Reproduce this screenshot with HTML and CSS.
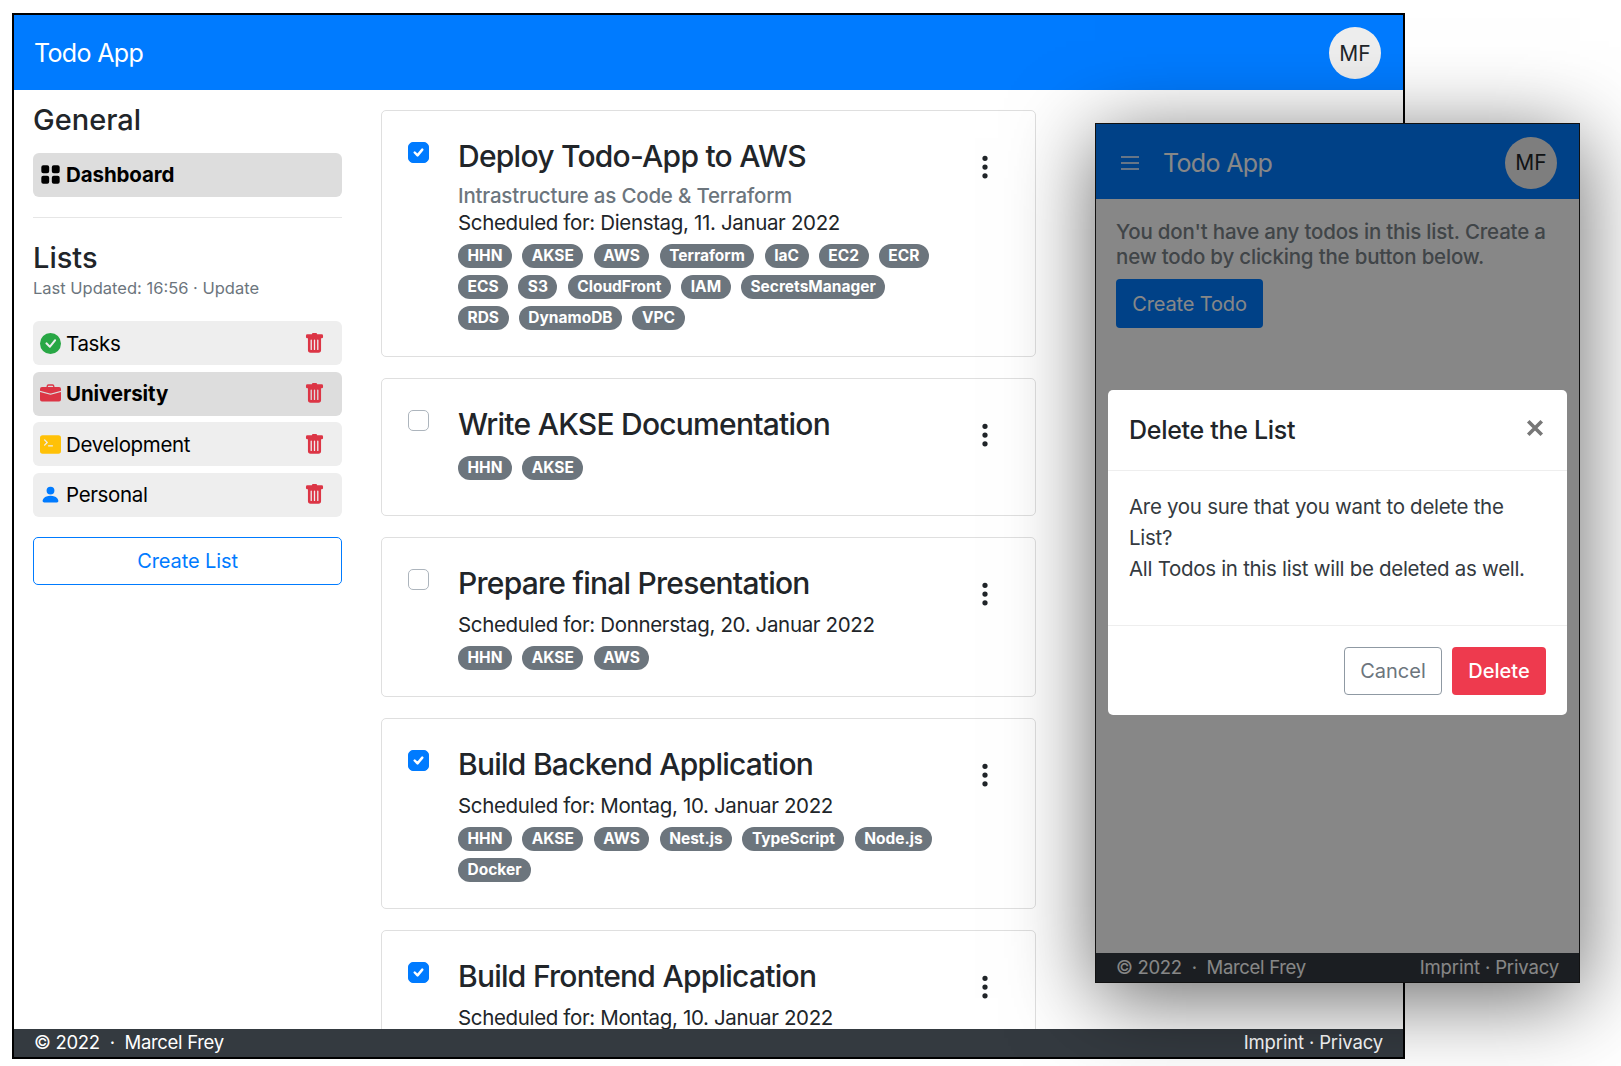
FILE: index.html
```html
<!DOCTYPE html>
<html>
	<head>
		<meta charset="utf-8" />
		<title>Todo App</title>
		<link rel="stylesheet" href="styles.css">
	</head>
	<body>
		<svg class="defs" xmlns="http://www.w3.org/2000/svg">
			<symbol id="i-grid" viewBox="0 0 16 16"><path d="M1 2.5A1.5 1.5 0 0 1 2.5 1h3A1.5 1.5 0 0 1 7 2.5v3A1.5 1.5 0 0 1 5.5 7h-3A1.5 1.5 0 0 1 1 5.5v-3zm8 0A1.5 1.5 0 0 1 10.5 1h3A1.5 1.5 0 0 1 15 2.5v3A1.5 1.5 0 0 1 13.5 7h-3A1.5 1.5 0 0 1 9 5.5v-3zm-8 8A1.5 1.5 0 0 1 2.5 9h3A1.5 1.5 0 0 1 7 10.5v3A1.5 1.5 0 0 1 5.5 15h-3A1.5 1.5 0 0 1 1 13.5v-3zm8 0A1.5 1.5 0 0 1 10.5 9h3a1.5 1.5 0 0 1 1.5 1.5v3a1.5 1.5 0 0 1-1.5 1.5h-3A1.5 1.5 0 0 1 9 13.5v-3z"/></symbol>
			<symbol id="i-check" viewBox="0 0 16 16"><path d="M16 8A8 8 0 1 1 0 8a8 8 0 0 1 16 0zm-3.97-3.03a.75.75 0 0 0-1.08.022L7.477 9.417 5.384 7.323a.75.75 0 0 0-1.06 1.06L6.97 11.03a.75.75 0 0 0 1.079-.02l3.992-4.99a.75.75 0 0 0-.01-1.05z"/></symbol>
			<symbol id="i-case" viewBox="0 0 16 16"><path d="M6.5 1A1.5 1.5 0 0 0 5 2.5V3H1.5A1.5 1.5 0 0 0 0 4.5v1.384l7.614 2.03a1.5 1.5 0 0 0 .772 0L16 5.884V4.5A1.5 1.5 0 0 0 14.5 3H11v-.5A1.5 1.5 0 0 0 9.5 1h-3zm0 1h3a.5.5 0 0 1 .5.5V3H6v-.5a.5.5 0 0 1 .5-.5z"/><path d="M0 12.5A1.5 1.5 0 0 0 1.5 14h13a1.5 1.5 0 0 0 1.5-1.5V6.85L8.129 8.947a.5.5 0 0 1-.258 0L0 6.85v5.65z"/></symbol>
			<symbol id="i-terminal" viewBox="0 0 16 16"><path d="M0 3a2 2 0 0 1 2-2h12a2 2 0 0 1 2 2v10a2 2 0 0 1-2 2H2a2 2 0 0 1-2-2V3zm9.5 5.5h-3a.5.5 0 0 0 0 1h3a.5.5 0 0 0 0-1zm-6.354-.354a.5.5 0 1 0 .708.708l2-2a.5.5 0 0 0 0-.708l-2-2a.5.5 0 1 0-.708.708L4.793 6.5 3.146 8.146z"/></symbol>
			<symbol id="i-person" viewBox="0 0 16 16"><path d="M3 14s-1 0-1-1 1-4 6-4 6 3 6 4-1 1-1 1H3zm5-6a3 3 0 1 0 0-6 3 3 0 0 0 0 6z"/></symbol>
			<symbol id="i-trash" viewBox="0 0 16 16"><path d="M2.5 1a1 1 0 0 0-1 1v1a1 1 0 0 0 1 1H3v9a2 2 0 0 0 2 2h6a2 2 0 0 0 2-2V4h.5a1 1 0 0 0 1-1V2a1 1 0 0 0-1-1H10a1 1 0 0 0-1-1H7a1 1 0 0 0-1 1H2.5zm3 4a.5.5 0 0 1 .5.5v7a.5.5 0 0 1-1 0v-7a.5.5 0 0 1 .5-.5zM8 5a.5.5 0 0 1 .5.5v7a.5.5 0 0 1-1 0v-7A.5.5 0 0 1 8 5zm3 .5v7a.5.5 0 0 1-1 0v-7a.5.5 0 0 1 1 0z"/></symbol>
			<symbol id="i-dots" viewBox="0 0 16 16"><path d="M9.5 13a1.5 1.5 0 1 1-3 0 1.5 1.5 0 0 1 3 0zm0-5a1.5 1.5 0 1 1-3 0 1.5 1.5 0 0 1 3 0zm0-5a1.5 1.5 0 1 1-3 0 1.5 1.5 0 0 1 3 0z"/></symbol>
		</svg>

		<!-- desktop window -->
		<div class="window desktop">
			<header class="topbar">
				<span class="brand">Todo App</span>
				<span class="avatar">MF</span>
			</header>
			<div class="content">
				<aside class="sidebar">
					<h3 class="side-title">General</h3>
					<a class="side-item active"><svg class="side-icon"><use href="#i-grid"/></svg>Dashboard</a>
					<hr class="divider">
					<h3 class="side-title">Lists</h3>
					<p class="updated">Last Updated: 16:56 · Update</p>
					<ul class="lists">
						<li class="side-item"><svg class="side-icon green"><use href="#i-check"/></svg>Tasks<svg class="trash"><use href="#i-trash"/></svg></li>
						<li class="side-item active"><svg class="side-icon red"><use href="#i-case"/></svg>University<svg class="trash"><use href="#i-trash"/></svg></li>
						<li class="side-item"><svg class="side-icon yellow"><use href="#i-terminal"/></svg>Development<svg class="trash"><use href="#i-trash"/></svg></li>
						<li class="side-item"><svg class="side-icon blue"><use href="#i-person"/></svg>Personal<svg class="trash"><use href="#i-trash"/></svg></li>
					</ul>
					<button class="btn-outline">Create List</button>
				</aside>
				<main class="todos">
					<article class="card">
						<span class="check on"><svg viewBox="0 0 20 20"><path d="M6 10l3 3 5-6"/></svg></span>
						<div class="card-body">
							<h2 class="todo-title">Deploy Todo-App to AWS</h2>
							<p class="todo-sub">Intrastructure as Code &amp; Terraform</p>
							<p class="todo-date">Scheduled for: Dienstag, 11. Januar 2022</p>
							<div class="tags">
								<span class="tag">HHN</span><span class="tag">AKSE</span><span class="tag">AWS</span><span class="tag">Terraform</span><span class="tag">IaC</span><span class="tag">EC2</span><span class="tag">ECR</span><span class="tag">ECS</span><span class="tag">S3</span><span class="tag">CloudFront</span><span class="tag">IAM</span><span class="tag">SecretsManager</span><span class="tag">RDS</span><span class="tag">DynamoDB</span><span class="tag">VPC</span>
							</div>
						</div>
						<svg class="kebab"><use href="#i-dots"/></svg>
					</article>
					<article class="card">
						<span class="check"></span>
						<div class="card-body">
							<h2 class="todo-title">Write AKSE Documentation</h2>
							<div class="tags">
								<span class="tag">HHN</span><span class="tag">AKSE</span>
							</div>
						</div>
						<svg class="kebab"><use href="#i-dots"/></svg>
					</article>
					<article class="card">
						<span class="check"></span>
						<div class="card-body">
							<h2 class="todo-title">Prepare final Presentation</h2>
							<p class="todo-date">Scheduled for: Donnerstag, 20. Januar 2022</p>
							<div class="tags">
								<span class="tag">HHN</span><span class="tag">AKSE</span><span class="tag">AWS</span>
							</div>
						</div>
						<svg class="kebab"><use href="#i-dots"/></svg>
					</article>
					<article class="card">
						<span class="check on"><svg viewBox="0 0 20 20"><path d="M6 10l3 3 5-6"/></svg></span>
						<div class="card-body">
							<h2 class="todo-title">Build Backend Application</h2>
							<p class="todo-date">Scheduled for: Montag, 10. Januar 2022</p>
							<div class="tags">
								<span class="tag">HHN</span><span class="tag">AKSE</span><span class="tag">AWS</span><span class="tag">Nest.js</span><span class="tag">TypeScript</span><span class="tag">Node.js</span><span class="tag">Docker</span>
							</div>
						</div>
						<svg class="kebab"><use href="#i-dots"/></svg>
					</article>
					<article class="card">
						<span class="check on"><svg viewBox="0 0 20 20"><path d="M6 10l3 3 5-6"/></svg></span>
						<div class="card-body">
							<h2 class="todo-title">Build Frontend Application</h2>
							<p class="todo-date">Scheduled for: Montag, 10. Januar 2022</p>
						</div>
						<svg class="kebab"><use href="#i-dots"/></svg>
					</article>
				</main>
			</div>
			<footer class="footbar">
				<span class="foot-copy">© 2022 &nbsp;·&nbsp; Marcel Frey</span>
				<span>Imprint · Privacy</span>
			</footer>
		</div>

		<!-- mobile window with the dialog open -->
		<div class="window mobile">
			<header class="topbar">
				<svg class="burger" viewBox="0 0 20 16"><path d="M1 2h18M1 8h18M1 14h18"/></svg>
				<span class="brand">Todo App</span>
				<span class="avatar">MF</span>
			</header>
			<div class="empty">
				<p class="empty-text">You don't have any todos in this list. Create a new todo by clicking the button below.</p>
				<button class="btn-primary">Create Todo</button>
			</div>
			<footer class="footbar">
				<span class="foot-copy">© 2022 &nbsp;·&nbsp; Marcel Frey</span>
				<span>Imprint · Privacy</span>
			</footer>
			<div class="backdrop"></div>
			<div class="modal">
				<div class="modal-head">
					<h4 class="modal-title">Delete the List</h4>
					<svg class="modal-close" viewBox="0 0 16 16"><path d="M2 2l12 12M14 2L2 14"/></svg>
				</div>
				<div class="modal-body">Are you sure that you want to delete the List?<br>All Todos in this list will be deleted as well.</div>
				<div class="modal-foot">
					<button class="btn-cancel">Cancel</button>
					<button class="btn-danger">Delete</button>
				</div>
			</div>
		</div>
	</body>
</html>
```

FILE: styles.css
```css
html, body { height: 100%; }
body {
	margin: 0;
	background: #fff;
	font-family: Inter, "Liberation Sans", sans-serif;
	font-size: 21px;
	color: #212529;
	overflow: hidden;
	position: relative;
}
h2, h3, h4, p, ul { margin: 0; padding: 0; }
ul { list-style: none; }
button { font-family: inherit; font-size: 20px; cursor: pointer; }
.defs { display: none; }

.window {
	position: absolute;
	display: flex;
	flex-direction: column;
	box-sizing: border-box;
	background: #fff;
	overflow: hidden;
}
.desktop { left: 12px; top: 13px; width: 1393px; height: 1046px; border: 2px solid #000; }
.mobile {
	left: 1095px; top: 123px; width: 485px; height: 860px;
	border: 1.5px solid #111;
	box-shadow: 0 15px 80px rgba(0,0,0,0.6);
}

.topbar {
	display: flex;
	align-items: center;
	flex: none;
	box-sizing: border-box;
	height: 75px;
	padding: 1px 22px 0 20px;
	background: #007bff;
	color: #fff;
}
.brand { font-size: 25px; letter-spacing: -0.65px; flex: 1; }
.avatar {
	width: 52px; height: 52px;
	border-radius: 50%;
	background: #eee;
	color: #212529;
	display: flex; align-items: center; justify-content: center;
	font-size: 21px;
}

.content { flex: 1; display: flex; min-height: 0; overflow: hidden; }
.sidebar { flex: none; width: 309px; margin: 0 39px 0 19px; padding-top: 12px; }
.side-title { font-size: 29px; font-weight: 500; line-height: 36px; }
.side-item {
	display: flex;
	align-items: center;
	box-sizing: border-box;
	height: 44px;
	padding-left: 7px;
	border-radius: 6px;
	background: #eee;
	color: #000;
	font-size: 20.5px;
	letter-spacing: -0.35px;
}
.side-item.active { background: #ddd; font-weight: 700; letter-spacing: -0.1px; }
.sidebar > .side-item { margin-top: 15px; padding-bottom: 1px; }
.side-icon { width: 21px; height: 21px; margin-right: 5px; fill: #000; flex: none; }
.side-icon.green { fill: #28a745; }
.side-icon.red { fill: #dc3545; }
.side-icon.yellow { fill: #ffc107; }
.side-icon.blue { fill: #007bff; }
.trash { width: 21px; height: 21px; fill: #dc3545; margin-left: auto; margin-right: 17px; flex: none; }
.divider { border: none; border-top: 1px solid #e6e6e6; margin: 20px 0 22px; }
.updated { font-size: 16.5px; color: #6c757d; line-height: 24px; }
.lists { display: flex; flex-direction: column; gap: 6.5px; margin-top: 21px; }
.btn-outline {
	display: block;
	width: 100%; height: 48px;
	margin-top: 20px;
	background: #fff;
	border: 1.5px solid #007bff;
	border-radius: 5px;
	color: #007bff;
	letter-spacing: -0.1px;
}

.todos { flex: 1; padding-top: 20px; min-width: 0; }
.card {
	display: flex;
	box-sizing: border-box;
	width: 655px;
	min-height: 138px;
	margin-bottom: 21px;
	padding: 27px 36px 26px 26px;
	background: #fff;
	border: 1px solid #dfdfdf;
	border-radius: 5px;
}
.check {
	flex: none;
	box-sizing: border-box;
	width: 21px; height: 21px;
	margin: 4px 29px 0 0;
	border: 1px solid #adb5bd;
	border-radius: 5px;
	background: #fff;
}
.check.on { background: #007bff; border-color: #007bff; }
.check svg { display: block; fill: none; stroke: #fff; stroke-width: 2.6; stroke-linecap: round; stroke-linejoin: round; }
.card-body { flex: 1; min-width: 0; }
.todo-title { font-size: 30px; font-weight: 500; line-height: 36px; letter-spacing: -0.75px; margin-bottom: 10px; }
.todo-sub { font-size: 20.5px; font-weight: 500; line-height: 24px; letter-spacing: -0.2px; color: #6c757d; margin-bottom: 1px; }
.todo-date { line-height: 28px; font-size: 20.5px; letter-spacing: -0.35px; margin-bottom: 2px; }
.tags { display: flex; flex-wrap: wrap; gap: 7px 10.3px; margin-top: 7px; max-width: 480px; }
.todo-title + .tags { margin: 14px 0 -1px; }
.tag {
	height: 24px;
	line-height: 24px;
	padding: 0 9.5px;
	border-radius: 12px;
	background: #6c757d;
	color: #fff;
	font-size: 15.5px;
	font-weight: 700;
}
.kebab { flex: none; width: 28px; height: 28px; margin-top: 15px; fill: #212529; }

.footbar {
	flex: none;
	position: relative;
	display: flex;
	justify-content: space-between;
	align-items: center;
	box-sizing: border-box;
	height: 28px;
	padding: 0 20px 2px;
	background: #343a40;
	color: #fff;
	font-size: 18.5px;
	letter-spacing: -0.15px;
}
.foot-copy { letter-spacing: -0.3px; }
.mobile .footbar { height: 29px; }

.mobile .brand { margin-left: 23px; }
.burger { width: 20px; height: 16px; fill: none; stroke: #fff; stroke-width: 1.6; }
.mobile .topbar { padding: 2px 22px 0 24px; }
.empty { flex: 1; padding: 20px 20px 0; }
.empty-text { font-size: 20.5px; letter-spacing: -0.2px; line-height: 25px; font-weight: 500; color: #7a8288; }
.btn-primary {
	display: block;
	width: 147px; height: 49px;
	margin-top: 10px;
	border: none;
	border-radius: 4px;
	background: #007bff;
	color: #fff;
	letter-spacing: -0.15px;
}

.backdrop { position: absolute; inset: 0; background: rgba(0,0,0,0.47); }
.modal {
	position: absolute;
	left: 12px; top: 266px; right: 12px;
	background: #fff;
	border-radius: 5px;
	color: #212529;
}
.modal-head {
	display: flex; align-items: center; justify-content: space-between;
	height: 80px;
	padding: 0 21px;
	border-bottom: 1px solid #eee;
}
.modal-title { font-size: 25px; font-weight: 500; letter-spacing: -0.3px; }
.modal-close { width: 18px; height: 18px; margin: -4px 2px 0 0; fill: none; stroke: #777; stroke-width: 3.2; }
.modal-body { padding: 20px 21px 0; height: 134px; font-size: 20.5px; letter-spacing: -0.3px; line-height: 31px; color: #343a40; }
.modal-foot {
	display: flex; justify-content: flex-end; gap: 10px;
	padding: 21px 21px 20px;
	border-top: 1px solid #eee;
}
.btn-cancel, .btn-danger { height: 48px; border-radius: 4px; padding: 0; }
.btn-cancel { width: 98px; background: #fff; border: 1.5px solid #8f99a3; color: #6c757d; }
.btn-danger { width: 94px; background: #ee3a4e; border: none; color: #fff; font-weight: 500; }
```
